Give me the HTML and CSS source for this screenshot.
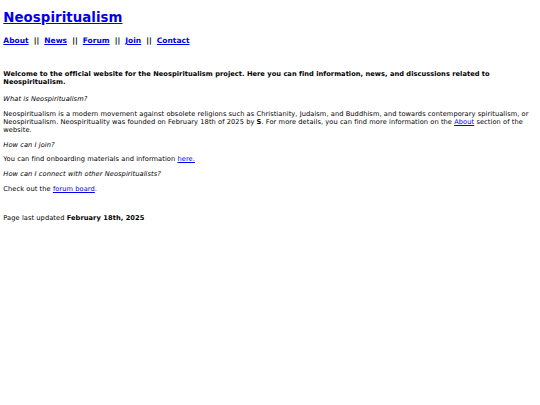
FILE: index.html
```html
<!DOCTYPE html>
<html>
<head>
<meta charset="utf-8">
<title>Neospiritualism</title>
<link rel="stylesheet" href="styles.css">
</head>
<body class="page">
<h1 class="title"><a class="link" href="#">Neospiritualism</a></h1>
<h3 class="nav"><a class="link" href="#">About</a> || <a class="link" href="#">News</a> || <a class="link" href="#">Forum</a> || <a class="link" href="#">Join</a> || <a class="link" href="#">Contact</a></h3>
<h4 class="welcome">Welcome to the official website for the Neospiritualism project. Here you can find information, news, and discussions related to Neospiritualism.</h4>
<p class="text"><i>What is Neospiritualism?</i></p>
<p class="text">Neospiritualism is a modern movement against obsolete religions such as Christianity, Judaism, and Buddhism, and towards contemporary spiritualism, or Neospiritualism. Neospirituality was founded on February 18th of 2025 by <b>S</b>. For more details, you can find more information on the <a class="link" href="#">About</a> section of the website.</p>
<p class="text"><i>How can I join?</i></p>
<p class="text">You can find onboarding materials and information <a class="link" href="#">here.</a></p>
<p class="text"><i>How can I connect with other Neospiritualists?</i></p>
<p class="text">Check out the <a class="link" href="#">forum board</a>.</p>
<br>
<p class="text">Page last updated <b>February 18th, 2025</b></p>
</body>
</html>
```
FILE: styles.css
```css
.page {
  margin: 0;
  padding: 0 3.33px;
  background: #fff;
  color: #000;
  font-family: "DejaVu Sans", Verdana, sans-serif;
  font-size: 6.67px;
  line-height: 1.215;
  letter-spacing: 0.065px;
}
.link {
  color: #0000ee;
  text-decoration: underline;
}
.title {
  font-size: 13.33px;
  font-weight: bold;
  letter-spacing: 0.05px;
  margin: 9.8px 0 0;
}
.nav {
  font-size: 7.5px;
  font-weight: bold;
  letter-spacing: 0;
  word-spacing: 2.5px;
  margin: 9.85px 0 0;
}
.welcome {
  font-size: 6.67px;
  font-weight: bold;
  letter-spacing: 0.035px;
  margin: 24.84px 0 8.87px;
}
.text {
  margin: 6.67px 0;
}
```
